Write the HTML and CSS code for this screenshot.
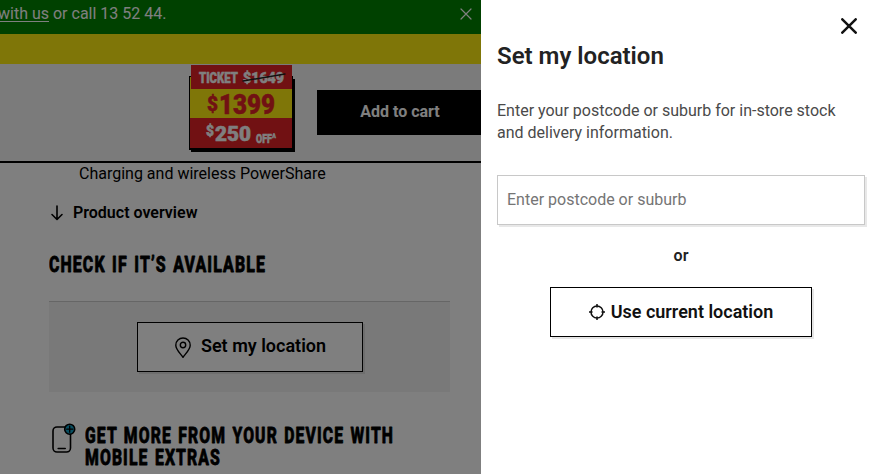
FILE: index.html
```html
<!DOCTYPE html>
<html lang="en">
<head>
<meta charset="utf-8">
<title>Set my location</title>
<link rel="stylesheet" href="styles.css">
</head>
<body>
<div class="app">
  <div class="page">
    <div class="notice">
      <p><a>with us</a> or call 13 52 44.</p>
      <svg class="notice-close" width="12" height="12" viewBox="0 0 12 12"><path d="M1 1l10 10M11 1L1 11"/></svg>
    </div>
    <div class="brand-strip"></div>
    <header class="buybar">
      <svg class="ticket" width="106" height="87" viewBox="0 0 106 87">
        <rect x="2" y="14" width="104" height="73"/>
        <rect x="0" y="11" width="104" height="74"/>
        <rect class="yellow" x="1" y="12" width="102" height="41"/>
        <rect class="red" x="2" y="0" width="101" height="24"/>
        <rect class="red" x="1" y="53" width="102" height="30"/>
        <g class="white">
          <text x="10" y="18" font-size="15.5" textLength="39" lengthAdjust="spacingAndGlyphs">TICKET</text>
          <text x="54" y="17.5" font-size="14" textLength="41" lengthAdjust="spacingAndGlyphs">$1649</text>
          <text x="17" y="71" font-size="14" textLength="8" lengthAdjust="spacingAndGlyphs">$</text>
          <text x="26" y="76" font-size="21" textLength="36" lengthAdjust="spacingAndGlyphs">250</text>
          <text x="67" y="77.5" font-size="12" textLength="20" lengthAdjust="spacingAndGlyphs">OFF^</text>
        </g>
        <g class="price">
          <text x="18" y="46" font-size="20" textLength="11" lengthAdjust="spacingAndGlyphs">$</text>
          <text x="30" y="49" font-size="28" textLength="56" lengthAdjust="spacingAndGlyphs">1399</text>
        </g>
        <path class="strike" d="M54 16L96 9"/>
      </svg>
      <div class="cart">Add to cart</div>
    </header>
    <main class="content">
      <p class="feature">Charging and wireless PowerShare</p>
      <div class="overview">
        <svg width="14" height="16" viewBox="0 0 14 16"><path d="M7 1v13M2 9.5l5 5 5-5"/></svg>
        <span>Product overview</span>
      </div>
      <h2><svg class="display" width="220" height="30"><text x="0" y="22" textLength="217" lengthAdjust="spacingAndGlyphs">CHECK IF IT’S AVAILABLE</text></svg></h2>
      <section class="availability">
        <div class="set-location">
          <svg width="18" height="22" viewBox="0 0 18 22"><path d="M9 20.3C7 17.2 1.8 12.7 1.8 8.2A7.2 7.2 0 0 1 16.2 8.2C16.2 12.7 11 17.2 9 20.3Z"/><circle cx="9" cy="8" r="2.7"/></svg>
          <span>Set my location</span>
        </div>
      </section>
      <section class="extras">
        <svg class="phone" width="26" height="31" viewBox="0 0 26 31"><rect x="2" y="4" width="17.5" height="25" rx="4"/><path d="M7.2 25.5h7"/><circle cx="18.7" cy="6.2" r="5"/><path class="plus" d="M15.7 6.2h6M18.7 3.2v6"/></svg>
        <svg class="display" width="316" height="48">
          <text x="0" y="20" textLength="309" lengthAdjust="spacingAndGlyphs">GET MORE FROM YOUR DEVICE WITH</text>
          <text x="0" y="42" textLength="136" lengthAdjust="spacingAndGlyphs">MOBILE EXTRAS</text>
        </svg>
      </section>
    </main>
  </div>
  <aside class="drawer">
    <svg class="drawer-close" width="16" height="16" viewBox="0 0 16 16"><path d="M1.3 1.3l13.4 13.4M14.7 1.3L1.3 14.7"/></svg>
    <h1>Set my location</h1>
    <p class="hint">Enter your postcode or suburb for in-store stock and delivery information.</p>
    <input class="postcode" type="text" placeholder="Enter postcode or suburb">
    <p class="or">or</p>
    <div class="current">
      <svg width="16" height="16" viewBox="0 0 16 16"><circle cx="8" cy="8" r="6"/><path d="M8 0v3M8 13v3M0 8h3M13 8h3"/></svg>
      <span>Use current location</span>
    </div>
  </aside>
</div>
</body>
</html>
```
FILE: styles.css
```css
* { box-sizing: border-box; }
body { margin: 0; font-family: Roboto, "Liberation Sans", sans-serif; color: #000; }
h1, h2, p { margin: 0; }
svg { display: block; flex: none; fill: none; stroke-linecap: round; stroke-linejoin: round; }

.app { display: flex; width: 880px; height: 474px; overflow: hidden; }
.page { position: relative; width: 481px; height: 474px; overflow: hidden; background: #fff; }
.page::after { content: ""; position: absolute; inset: 0; background: rgba(0, 0, 0, .5); }

.notice { display: flex; justify-content: space-between; height: 34px; padding: 4px 9px 0 0; background: #008200; color: #fff; font-size: 16px; line-height: 19px; white-space: nowrap; }
.notice p { margin-left: -2px; }
.notice a { text-decoration: underline; text-underline-offset: 2px; }
.notice-close { margin-top: 4px; stroke: #fff; stroke-width: 1.2; }
.brand-strip { height: 30px; background: #ffec10; }

.buybar { display: flex; align-items: flex-start; height: 99px; padding: 1px 0 0 189px; background: #f6f6f6; border-bottom: 2px solid #000; }
.ticket { fill: #000; font-family: Roboto, sans-serif; font-weight: 900; }
.ticket text { stroke-width: .5; }
.ticket .yellow { fill: #ffec10; }
.ticket .red { fill: #e32226; }
.ticket .white { fill: #fff; stroke: #fff; }
.ticket .price { fill: #e32226; stroke: #e32226; }
.ticket .strike { stroke: #222; stroke-width: 1.5; }
.cart { flex: none; width: 166px; height: 45px; margin: 25px 0 0 22px; background: #000; color: #fff; font-weight: 700; font-size: 16px; line-height: 43px; text-align: center; }

.content { padding-left: 49px; }
.feature { height: 38px; padding: 1px 0 0 30px; font-size: 16px; line-height: 19px; }
.overview { display: flex; gap: 9px; height: 46px; padding: 4px 0 0 1px; font-weight: 600; font-size: 16px; line-height: 15px; }
.overview svg { stroke: #000; stroke-width: 1.6; }
h2 { height: 54px; padding-top: 3px; }
.display { fill: #000; stroke: #000; stroke-width: .8; font: 800 22.5px Roboto, sans-serif; letter-spacing: 1.6px; word-spacing: 2px; }

.availability { width: 401px; height: 91px; padding: 20px 0 0 88px; background: #f2f2f2; border-top: 1px solid #ccc; }
.set-location { display: flex; justify-content: center; gap: 9px; width: 226px; height: 50px; padding-top: 12px; background: #fff; border: 1px solid #000; box-shadow: 2px 2px 0 #ddd; font-weight: 600; font-size: 18px; line-height: 21px; }
.set-location svg { margin-top: 2px; stroke: #000; stroke-width: 1.4; }

.extras { display: flex; gap: 8px; padding: 31px 0 0 2px; }
.phone { stroke: #000; stroke-width: 1.6; }
.phone circle { fill: #109fc4; }
.phone .plus { stroke-width: 1.3; }

.drawer { display: flex; flex-direction: column; width: 399px; padding: 18px 15px 0 16px; background: #fff; color: #222; }
.drawer-close { align-self: flex-end; margin-right: 8px; stroke: #111; stroke-width: 2.5; }
h1 { height: 66px; padding-top: 8px; font-weight: 600; font-size: 24px; line-height: 28px; }
.hint { height: 75px; font-size: 16px; line-height: 22px; color: #4a4a4a; }
.postcode { width: 368px; height: 50px; padding: 0 9px 2px; background: #fff; border: 1px solid #c8c8c8; border-radius: 0; box-shadow: 2px 2px 0 #e8e8e8; font: 400 16px Roboto, sans-serif; }
.postcode::placeholder { color: #757575; opacity: 1; }
.or { height: 62px; padding-top: 21px; text-align: center; font-weight: 600; font-size: 16px; line-height: 19px; }
.current { display: flex; align-self: center; justify-content: center; gap: 6px; width: 262px; height: 50px; padding-top: 13px; border: 1px solid #000; box-shadow: 2px 2px 0 #e5e5e5; color: #111; font-weight: 600; font-size: 18px; line-height: 21px; }
.current svg { margin-top: 3px; stroke: #111; stroke-width: 1.5; }
```
